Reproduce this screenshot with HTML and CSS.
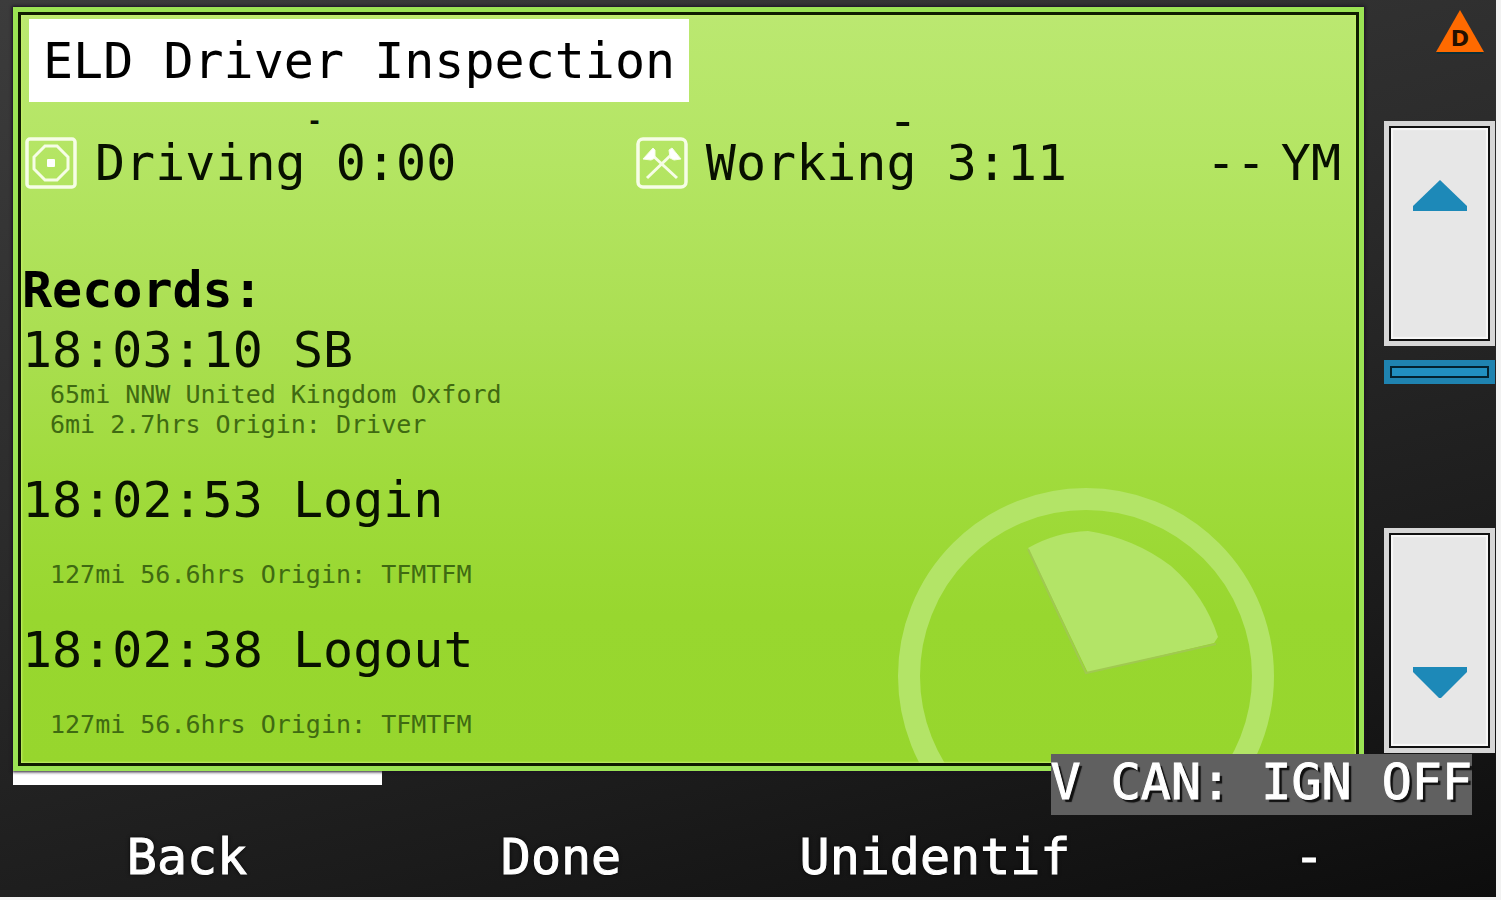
FILE: index.html
```html
<!DOCTYPE html>
<html lang="en">
<head>
  <meta charset="UTF-8">
  <meta name="viewport" content="width=device-width, initial-scale=1.0">
  <title>ELD Driver Inspection</title>
  <link rel="stylesheet" href="styles.css">
</head>
<body>
  <div class="device">
    <div class="top">
      <main class="screen">
        <svg class="dial" viewBox="0 0 376 275" aria-hidden="true">
          <circle cx="188" cy="188" r="177" fill="none" stroke="#b3e467" stroke-width="22"/>
          <path d="M190 185 L130 60 Q158 44 190 43 Q236 50 273 78 Q307 108 320 149 L316 155 Z" fill="#b3e467"/>
          <path d="M130 61 L188 185 L318 156" fill="none" stroke="#a0c950" stroke-width="2"/>
        </svg>

        <h1 class="title">ELD Driver Inspection</h1>

        <div class="grid previous">
          <span class="rest">-</span>
          <span class="available">-</span>
        </div>

        <div class="grid totals">
          <div class="total">
            <svg class="icon" viewBox="0 0 52 52" fill="none" stroke="#f6fde6" aria-hidden="true">
              <rect x="2" y="2" width="48" height="48" rx="3" stroke-width="3.5"/>
              <path d="M20 9 H32 L43 20 V32 L32 43 H20 L9 32 V20 Z" stroke-width="3"/>
              <rect x="22" y="22" width="8" height="8" rx="1" fill="#fff" stroke="none"/>
            </svg>
            <span>Driving 0:00</span>
          </div>
          <div class="total">
            <svg class="icon" viewBox="0 0 52 52" fill="none" stroke="#f6fde6" aria-hidden="true">
              <rect x="2" y="2" width="48" height="48" rx="5" stroke-width="3.5"/>
              <path d="M11 41 L36 17 M41 41 L15 17" stroke-width="3"/>
              <path d="M7 22 L17 11 L19 13 L19 21 L15 23 Z M45 22 L36 11 L33 13 L34 21 L38 23 Z" fill="#fff" stroke-width="1"/>
            </svg>
            <span>Working 3:11</span>
          </div>
          <div class="mode"><span>--</span><span>YM</span></div>
        </div>

        <section class="records">
          <h2>Records:</h2>
          <article class="record">
            <h3>18:03:10 SB</h3>
            <p>65mi NNW United Kingdom Oxford</p>
            <p>6mi 2.7hrs Origin: Driver</p>
          </article>
          <article class="record">
            <h3>18:02:53 Login</h3>
            <p></p>
            <p>127mi 56.6hrs Origin: TFMTFM</p>
          </article>
          <article class="record">
            <h3>18:02:38 Logout</h3>
            <p></p>
            <p>127mi 56.6hrs Origin: TFMTFM</p>
          </article>
        </section>
      </main>

      <aside class="side">
        <div class="status">
          <svg class="warning" viewBox="0 0 48 44" role="img">
            <path d="M24 0 L48 42 H0 Z" fill="#ff6a00"/>
            <path d="M1 43 H47" stroke="#0b3038" stroke-width="2"/>
            <text x="24" y="36" text-anchor="middle">D</text>
          </svg>
        </div>
        <button class="scroll up" type="button" aria-label="Scroll up">
          <svg viewBox="0 0 54 32" aria-hidden="true"><path d="M27 0 L54 26 V31 H0 V26 Z"/></svg>
        </button>
        <div class="track"><div class="thumb"></div></div>
        <button class="scroll down" type="button" aria-label="Scroll down">
          <svg viewBox="0 0 54 32" aria-hidden="true"><path d="M0 0 H54 V5 L28 31 H26 L0 5 Z"/></svg>
        </button>
        <div class="toast">V CAN: IGN OFF</div>
      </aside>
    </div>

    <footer>
      <div class="progress"></div>
      <nav class="softkeys">
        <button type="button">Back</button>
        <button type="button">Done</button>
        <button type="button">Unidentif</button>
        <button type="button">-</button>
      </nav>
    </footer>
  </div>
</body>
</html>
```
FILE: styles.css
```css
* {
  margin: 0;
  padding: 0;
  box-sizing: border-box;
}

body {
  min-height: 100vh;
  display: flex;
  padding: 0 5px 3px 0;
  background: #f2f2f2;
  color: #081000;
  font-family: "DejaVu Sans Mono", monospace;
  font-size: 50px;
  line-height: 60px;
}

button {
  border: none;
  background: none;
  font: inherit;
  color: inherit;
  cursor: pointer;
}

.device {
  flex: 1;
  display: flex;
  flex-direction: column;
  background: linear-gradient(165deg, #3c3c3c 0%, #2c2c2c 40%, #1b1b1b 75%, #0d0d0d 100%);
}

.top {
  flex: 1;
  display: flex;
  gap: 20px;
  padding: 7px 1px 0 13px;
}

/* Main screen */
.screen {
  flex: 1;
  position: relative;
  overflow: hidden;
  border: 5px solid #9be354;
  box-shadow: 0 0 3px 1px #1b1024;
  background: linear-gradient(#bbe871, #b4e563 20%, #abdf52 42%, #a0db3c 62%, #98d72f 80%, #97d62d);
}

.screen::after {
  content: "";
  position: absolute;
  inset: 0;
  border: 3px solid #101c00;
  box-shadow: inset 0 0 2px 1px #c4f06c;
}

.dial {
  position: absolute;
  right: 85px;
  bottom: 3px;
  width: 376px;
  height: 275px;
}

.title {
  position: relative;
  width: fit-content;
  margin: 7px 0 0 11px;
  padding: 12px 14px 11px;
  background: #fff;
  color: #000;
  font-size: 50px;
  font-weight: normal;
}

.grid {
  display: grid;
  grid-template-columns: 15fr 14fr 135px;
  padding: 0 18px 0 7px;
}

.previous {
  height: 31px;
  line-height: 38px;
}

.rest {
  padding-left: 282px;
  font-size: 25px;
  font-weight: bold;
}

.available {
  padding-left: 252px;
}

.total {
  display: flex;
  align-items: center;
  gap: 18px;
  white-space: nowrap;
}

.icon {
  width: 52px;
  height: 52px;
}

.mode {
  display: flex;
  justify-content: space-between;
}

/* Duty records */
.records {
  position: relative;
  padding: 67px 0 0 4px;
}

.records h2 {
  font-size: 50px;
  color: #000;
}

.record {
  padding-bottom: 30px;
}

.record:last-child {
  padding-bottom: 0;
}

.record h3 {
  font-size: 50px;
  font-weight: normal;
}

.record p {
  height: 30px;
  padding-left: 28px;
  color: #3f6a12;
  font-size: 25px;
  line-height: 30px;
}

/* Right hand scroll bar */
.side {
  position: relative;
  width: 111px;
  display: flex;
  flex-direction: column;
  padding-bottom: 18px;
}

.status {
  height: 114px;
  padding: 3px 11px 0 0;
  text-align: right;
  line-height: 0;
}

.warning {
  width: 48px;
  height: 44px;
}

.warning text {
  font: bold 22px "DejaVu Sans", sans-serif;
  fill: #241000;
}

.scroll {
  flex: 1 1 225px;
  display: flex;
  justify-content: center;
  border: 5px solid #d6d6d6;
  background: #e7e7e7;
  box-shadow: inset 0 0 0 2px #111, inset 0 0 1px 4px #f8f8f8;
}

.scroll svg {
  width: 54px;
  height: 32px;
  fill: #1d89b8;
}

.up {
  padding-top: 54px;
}

.down {
  align-items: flex-end;
  padding-bottom: 49px;
}

.track {
  flex: 1 1 182px;
  padding-top: 14px;
}

.thumb {
  height: 24px;
  border: 6px solid #1f83b0;
  background: #218fc0;
  box-shadow: inset 0 0 0 2px #04222f;
}

.toast {
  position: absolute;
  right: 23px;
  bottom: -44px;
  z-index: 1;
  padding-bottom: 5px;
  background: #606060;
  color: #fff;
  line-height: 56px;
  white-space: nowrap;
  text-shadow: 3px 3px 1px #111;
  -webkit-text-stroke: 1px #fff;
}

/* Bottom softkeys */
.progress {
  width: 369px;
  height: 14px;
  margin-left: 13px;
  background: #fff;
}

.softkeys {
  display: grid;
  grid-template-columns: repeat(4, 1fr);
  padding: 42px 0 10px;
}

.softkeys button {
  color: #fff;
  text-shadow: 0 0 4px #000;
  -webkit-text-stroke: 1px #fff;
}
```
